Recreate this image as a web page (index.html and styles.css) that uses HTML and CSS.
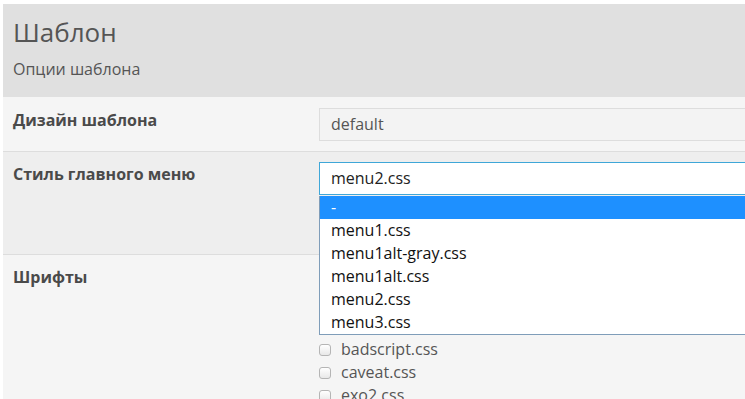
FILE: index.html
```html
<!DOCTYPE html>
<html lang="ru">
<head>
    <meta charset="UTF-8">
    <title>Шаблон</title>
    <link rel="stylesheet" href="styles.css">
</head>
<body>

<div class="panel">
    <!-- Kopf -->
    <div class="panel-heading">
        <h2>Шаблон</h2>
        <p>Опции шаблона</p>
    </div>

    <!-- Design -->
    <div class="row">
        <label class="row-label">Дизайн шаблона</label>
        <div class="row-field">
            <div class="input readonly">default</div>
        </div>
    </div>

    <!-- Menu -->
    <div class="row row-alt row-menu">
        <label class="row-label">Стиль главного меню</label>
        <div class="row-field">
            <div class="select">menu2.css</div>
            <ul class="dropdown">
                <li class="active">-</li>
                <li>menu1.css</li>
                <li>menu1alt-gray.css</li>
                <li>menu1alt.css</li>
                <li>menu2.css</li>
                <li>menu3.css</li>
            </ul>
        </div>
    </div>

    <!-- Schriften (obere Einträge liegen unter der offenen Liste) -->
    <div class="row row-fonts">
        <label class="row-label">Шрифты</label>
        <div class="row-field">
            <ul class="checks">
                <li><span class="box"></span>badscript.css</li>
                <li><span class="box"></span>caveat.css</li>
                <li><span class="box"></span>exo2.css</li>
                <li><span class="box"></span>lobster.css</li>
            </ul>
        </div>
    </div>
</div>

</body>
</html>
```

FILE: styles.css
```css
/* Allgemein */
body {
    margin: 0;
    background-color: #fff;
    font-family: "Open Sans", "Noto Sans", sans-serif;
    color: #555;
    overflow: hidden;
}

.panel {
    margin: 4px 0 0 3px;
    width: 900px;
}

/* Kopf */
.panel-heading {
    background-color: #e0e0e0;
    padding: 12px 10px 17px;
}

.panel-heading h2 {
    margin: 0;
    font-size: 26px;
    font-weight: normal;
    line-height: 32px;
}

.panel-heading p {
    margin: 10px 0 0;
    font-size: 16px;
    line-height: 22px;
}

/* Zeilen */
.row {
    display: grid;
    grid-template-columns: 306px 1fr;
    background-color: #f5f5f5;
    padding: 11px 10px 10px;
    border-bottom: 1px solid #ddd;
}

.row-alt {
    background-color: #eee;
    padding-top: 10px;
}

.row-menu {
    height: 82px;
}

.row-fonts {
    border-bottom: none;
    padding-top: 12px;
    height: 160px;
}

.row-label {
    font-size: 16px;
    font-weight: bold;
    line-height: 20px;
    padding-top: 2px;
    color: #4a4a4a;
}

.row-fonts .row-label {
    padding-top: 0;
}

.row-field {
    position: relative;
}

.input {
    height: 31px;
    line-height: 31px;
    padding: 0 11px;
    font-size: 16px;
    border: 1px solid #ddd;
    background-color: #f3f3f3;
    color: #555;
}

.select {
    height: 31px;
    line-height: 31px;
    padding: 0 11px;
    font-size: 16px;
    border: 1px solid #3fa7d8;
    background-color: #fff;
    color: #222;
}

/* Aufgeklappte Liste */
.dropdown {
    position: absolute;
    top: 34px;
    left: 0;
    right: 0;
    z-index: 2;
    margin: 0;
    padding: 0;
    list-style: none;
    background-color: #fff;
    border: 1px solid #7f9db9;
    border-top: none;
}

.dropdown li {
    height: 23px;
    line-height: 23px;
    padding: 0 11px;
    font-size: 16px;
    color: #111;
}

.dropdown li.active {
    background-color: #1e90ff;
    color: #fff;
}

/* Checkboxen */
.checks {
    margin: 0;
    padding: 71px 0 0;
    list-style: none;
}

.checks li {
    height: 23px;
    line-height: 23px;
    font-size: 16px;
    display: flex;
    align-items: center;
    gap: 10px;
    color: #555;
}

.box {
    width: 10px;
    height: 10px;
    border: 1px solid #b5b5b5;
    border-radius: 3px;
    background: linear-gradient(#fff, #e8e8e8);
}
```
